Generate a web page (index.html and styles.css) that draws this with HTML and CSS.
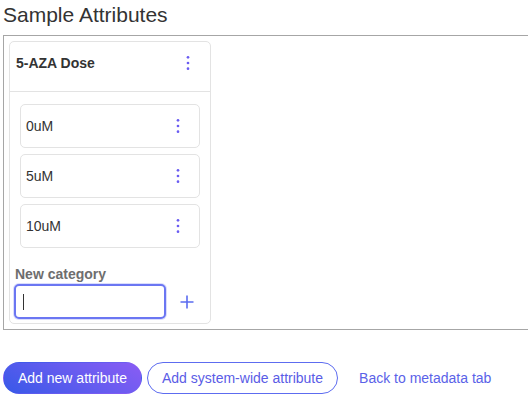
FILE: index.html
```html
<!DOCTYPE html>
<html lang="en">
<head>
<meta charset="utf-8">
<title>Sample Attributes</title>
<link rel="stylesheet" href="styles.css">
</head>
<body>
<main class="page">
  <h2 class="page-title">Sample Attributes</h2>
  <section class="attributes-box">
    <div class="attr-card">
      <div class="attr-card-header">
        <span class="attr-name">5-AZA Dose</span>
        <button class="kebab" aria-label="More options">
          <svg width="4" height="16" viewBox="0 0 4 16"><circle cx="2" cy="2.3" r="1.35"/><circle cx="2" cy="8" r="1.35"/><circle cx="2" cy="13.7" r="1.35"/></svg>
        </button>
      </div>
      <div class="attr-card-body">
        <ul class="category-list">
          <li class="category-item"><span>0uM</span>
            <button class="kebab" aria-label="More options"><svg width="4" height="16" viewBox="0 0 4 16"><circle cx="2" cy="2.3" r="1.35"/><circle cx="2" cy="8" r="1.35"/><circle cx="2" cy="13.7" r="1.35"/></svg></button>
          </li>
          <li class="category-item"><span>5uM</span>
            <button class="kebab" aria-label="More options"><svg width="4" height="16" viewBox="0 0 4 16"><circle cx="2" cy="2.3" r="1.35"/><circle cx="2" cy="8" r="1.35"/><circle cx="2" cy="13.7" r="1.35"/></svg></button>
          </li>
          <li class="category-item"><span>10uM</span>
            <button class="kebab" aria-label="More options"><svg width="4" height="16" viewBox="0 0 4 16"><circle cx="2" cy="2.3" r="1.35"/><circle cx="2" cy="8" r="1.35"/><circle cx="2" cy="13.7" r="1.35"/></svg></button>
          </li>
        </ul>
        <label class="new-label" for="newcat">New category</label>
        <div class="new-row">
          <div class="input-wrap">
            <input id="newcat" class="new-input" type="text">
            <span class="caret"></span>
          </div>
          <button class="add-btn" aria-label="Add category">
            <svg width="14" height="14" viewBox="0 0 14 14"><path d="M7 0.5V13.5M0.5 7H13.5" stroke="currentColor" stroke-width="1.6" fill="none"/></svg>
          </button>
        </div>
      </div>
    </div>
  </section>
  <div class="actions">
    <button class="btn btn-primary">Add new attribute</button>
    <button class="btn btn-outline">Add system-wide attribute</button>
    <a class="btn btn-link" href="#">Back to metadata tab</a>
  </div>
</main>
</body>
</html>
```
FILE: styles.css
```css
html, body {
  margin: 0;
  padding: 0;
  background: #fff;
}
body {
  font-family: "Liberation Sans", Arial, sans-serif;
  color: #333;
}
.page {
  padding: 0 0 0 3px;
}
.page-title {
  margin: 0;
  padding-top: 3px;
  font-size: 21px;
  line-height: 24px;
  font-weight: normal;
  color: #333;
}
.attributes-box {
  margin-top: 8px;
  border: 1px solid #a6a6a6;
  border-right: 0;
  padding: 5px 5px 5px 5px;
}
.attr-card {
  width: 202px;
  box-sizing: border-box;
  border: 1px solid #e3e3e3;
  border-radius: 5px;
}
.attr-card-header {
  display: flex;
  align-items: center;
  justify-content: space-between;
  height: 50px;
  box-sizing: border-box;
  padding: 8px 20px 16px 6px;
  border-bottom: 1px solid #e3e3e3;
}
.attr-name {
  font-size: 14px;
  font-weight: bold;
  color: #333;
}
.kebab {
  border: 0;
  background: none;
  padding: 0;
  width: 4px;
  height: 16px;
  display: flex;
  cursor: pointer;
}
.kebab svg {
  fill: #6a5cf2;
}
.attr-card-body {
  padding: 12px 10px 4px 4px;
}
.category-list {
  list-style: none;
  margin: 0 0 18px 6px;
  padding: 0;
  display: flex;
  flex-direction: column;
  gap: 6px;
}
.category-item {
  height: 44px;
  box-sizing: border-box;
  border: 1px solid #e3e3e3;
  border-radius: 5px;
  display: flex;
  align-items: center;
  justify-content: space-between;
  padding: 0 19px 0 5px;
  font-size: 14px;
  color: #333;
}
.new-label {
  display: block;
  padding-left: 1px;
  font-size: 14px;
  line-height: 16px;
  font-weight: bold;
  color: #6e6e6e;
}
.new-row {
  margin-top: 2px;
  display: flex;
  align-items: center;
  gap: 14px;
}
.input-wrap {
  position: relative;
  display: flex;
}
.new-input {
  width: 152px;
  height: 35px;
  box-sizing: border-box;
  border: 2px solid #6b76f2;
  border-radius: 5px;
  box-shadow: 0 0 0 1px rgba(107, 118, 242, 0.25);
  outline: none;
  padding: 0 7px;
  font-family: inherit;
  font-size: 14px;
  color: #333;
}
.caret {
  position: absolute;
  left: 9px;
  top: 10px;
  width: 1px;
  height: 16px;
  background: #333;
}
.add-btn {
  border: 0;
  background: none;
  padding: 0;
  width: 14px;
  height: 14px;
  display: flex;
  color: #5b6cf0;
  cursor: pointer;
}
.actions {
  margin-top: 32px;
  display: flex;
  align-items: center;
  gap: 5px;
}
.btn {
  height: 32px;
  box-sizing: border-box;
  border-radius: 16px;
  font-family: "Liberation Sans", Arial, sans-serif;
  font-size: 14px;
  display: inline-flex;
  align-items: center;
  padding: 0 14px;
  cursor: pointer;
  text-decoration: none;
}
.btn-primary {
  border: 1px solid transparent;
  color: #fff;
  padding: 0 14px;
  background: linear-gradient(30deg, #3859e8 0%, #6a5cf0 60%, #8a5cf4 100%);
}
.btn-outline {
  border: 1px solid #5d6cf0;
  background: #fff;
  color: #5a5ce6;
}
.btn-link {
  border: 1px solid transparent;
  background: none;
  color: #5a62e8;
  padding: 0 15px;
}
```
